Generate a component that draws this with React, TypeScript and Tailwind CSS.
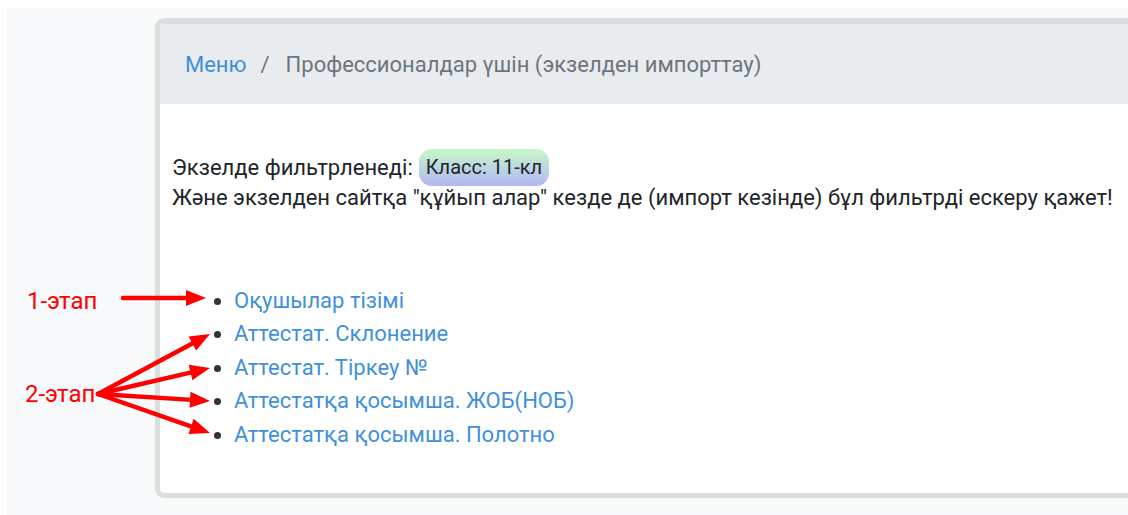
import React from 'react';

const links = [
  'Оқушылар тізімі',
  'Аттестат. Склонение',
  'Аттестат. Тіркеу №',
  'Аттестатқа қосымша. ЖОБ(НОБ)',
  'Аттестатқа қосымша. Полотно',
];

// red arrows drawn on top of the page: [x1, y1, x2, y2]
const arrows: [number, number, number, number][] = [
  [123, 298, 206, 298],
  [98, 394, 210, 334],
  [98, 394, 210, 368],
  [98, 394, 210, 401],
  [98, 394, 210, 433],
];

function Arrow({ a }: { a: [number, number, number, number] }) {
  const [x1, y1, x2, y2] = a;
  const dx = x2 - x1;
  const dy = y2 - y1;
  const len = Math.hypot(dx, dy);
  const ux = dx / len;
  const uy = dy / len;
  const head = 20;
  const half = 8;
  const bx = x2 - ux * head;
  const by = y2 - uy * head;
  const pts = `${x2},${y2} ${bx - uy * half},${by + ux * half} ${bx + uy * half},${by - ux * half}`;
  return (
    <g>
      <line x1={x1} y1={y1} x2={bx + ux * 2} y2={by + uy * 2} stroke="#ff0000" strokeWidth={4.5} strokeLinecap="round" />
      <polygon points={pts} fill="#ff0000" />
    </g>
  );
}

export default function App() {
  return (
    <div className="relative w-[1128px] h-[515px] overflow-hidden bg-white font-['Roboto',sans-serif]">
      <div className="mt-[8px] ml-[7px] h-[507px] bg-[#f8f9fa] pt-[10px] pl-[148px]">
        <div className="w-[1000px] h-[480px] rounded-[9px] border-[5px] border-t-[6px] border-[#d9dfdd] bg-white overflow-hidden">
          {/* breadcrumb */}
          <div className="h-[80px] bg-[#e9ecef] flex items-center pl-[25px] text-[22px] text-[#6c757d]">
            <a className="text-[#3d8fdc]">Меню</a>
            <span className="ml-[14px] mr-[16px]">/</span>
            <span>Профессионалдар үшін (экзелден импорттау)</span>
          </div>

          <div className="pl-[12px] pt-[45px] text-[22px] text-[#212529] leading-[31px]">
            <div className="flex items-center">
              <span>Экзелде фильтрленеді:</span>
              <span className="ml-[6px] px-[7px] h-[37px] flex items-center rounded-[13px] bg-gradient-to-b from-[#c8f7c5] to-[#b3b6f4] text-[20px]">
                Класс: 11-кл
              </span>
            </div>
            <div className="-mt-[4px]">
              Және экзелден сайтқа "құйып алар" кезде де (импорт кезінде) бұл фильтрді ескеру қажет!
            </div>

            <ul className="mt-[71px] pl-[62px] list-disc marker:text-[#333] leading-[33.4px]">
              {links.map((l) => (
                <li key={l}>
                  <a className="text-[#4190dc]">{l}</a>
                </li>
              ))}
            </ul>
          </div>
        </div>
      </div>

      {/* annotations */}
      <div className="absolute left-[27px] top-[289px] text-[24px] text-[#ff0000] leading-none">1-этап</div>
      <div className="absolute left-[25px] top-[382px] text-[24px] text-[#ff0000] leading-none">2-этап</div>
      <svg className="absolute left-0 top-0" width={1128} height={515}>
        {arrows.map((a, i) => (
          <Arrow key={i} a={a} />
        ))}
      </svg>
    </div>
  );
}
